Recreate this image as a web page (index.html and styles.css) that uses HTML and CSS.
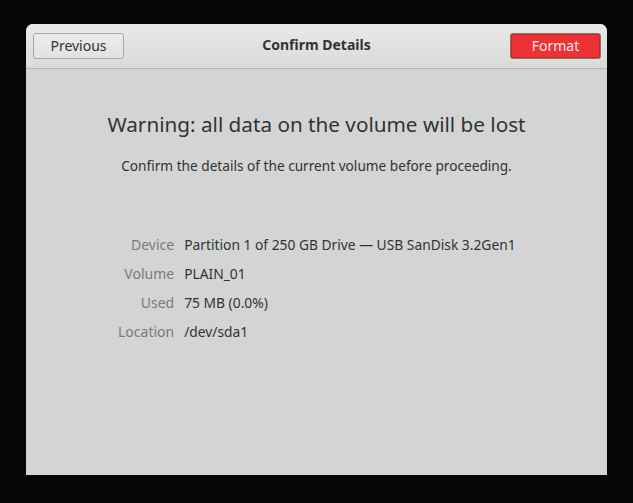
FILE: index.html
```html
<!DOCTYPE html>
<html>
<head>
<meta charset="utf-8">
<link rel="stylesheet" href="styles.css">
</head>
<body>
<div class="window">
  <header class="headerbar">
    <button class="btn">Previous</button>
    <div class="title">Confirm Details</div>
    <button class="btn btn-destructive">Format</button>
  </header>
  <main class="content">
    <h1 class="heading">Warning: all data on the volume will be lost</h1>
    <p class="sub">Confirm the details of the current volume before proceeding.</p>
    <div class="details">
      <div class="label">Device</div><div class="value">Partition 1 of 250 GB Drive — USB SanDisk 3.2Gen1</div>
      <div class="label">Volume</div><div class="value">PLAIN_01</div>
      <div class="label">Used</div><div class="value">75 MB (0.0%)</div>
      <div class="label">Location</div><div class="value">/dev/sda1</div>
    </div>
  </main>
</div>
</body>
</html>
```

FILE: styles.css
```css
html, body {
  margin: 0;
  padding: 0;
  background: #050505;
}
body {
  width: 633px;
  height: 503px;
  padding: 24px 26px 0 26px;
  box-sizing: border-box;
  font-family: "Noto Sans", sans-serif;
  color: #2e3436;
}
.window {
  width: 581px;
  height: 451px;
  background: #d4d4d4;
  border-radius: 7px 7px 0 0;
  overflow: hidden;
  display: flex;
  flex-direction: column;
}
.headerbar {
  height: 45px;
  box-sizing: border-box;
  border-bottom: 1px solid #b4b4b4;
  background: linear-gradient(#e9e9e9, #dadada);
  display: flex;
  align-items: center;
  justify-content: space-between;
  padding: 0 6px 0 7px;
  position: relative;
}
.title {
  position: absolute;
  left: 0;
  right: 0;
  top: 11px;
  text-align: center;
  font-weight: bold;
  font-size: 14px;
  line-height: 20px;
  pointer-events: none;
}
.btn {
  width: 91px;
  height: 26px;
  box-sizing: border-box;
  border: 1px solid #a9a9a9;
  border-radius: 3px;
  background: linear-gradient(#ececec, #e2e2e2);
  font-family: inherit;
  font-size: 14px;
  line-height: 18px;
  color: #2e3436;
  padding: 0 0 1px 0;
  position: relative;
  z-index: 1;
}
.btn-destructive {
  background: #ec3235;
  color: #fbeaea;
  border: 1px dotted #2fb98a;
  box-shadow: inset 0 0 0 1px #c22a2d;
}
.content {
  flex: 1;
  display: flex;
  flex-direction: column;
  align-items: center;
  padding-top: 40px;
}
.heading {
  margin: 0;
  font-weight: normal;
  font-size: 20.7px;
  line-height: 30px;
}
.sub {
  margin: 18px 0 0 0;
  font-size: 13.65px;
  line-height: 18px;
}
.details {
  margin-top: 61px;
  display: grid;
  grid-template-columns: auto auto;
  column-gap: 10px;
  row-gap: 11px;
  font-size: 14px;
  line-height: 18px;
  align-self: flex-start;
  margin-left: 92px;
}
.label {
  text-align: right;
  color: #7b7b7b;
}
.value {
  color: #2e3436;
  font-size: 13.8px;
}
```
